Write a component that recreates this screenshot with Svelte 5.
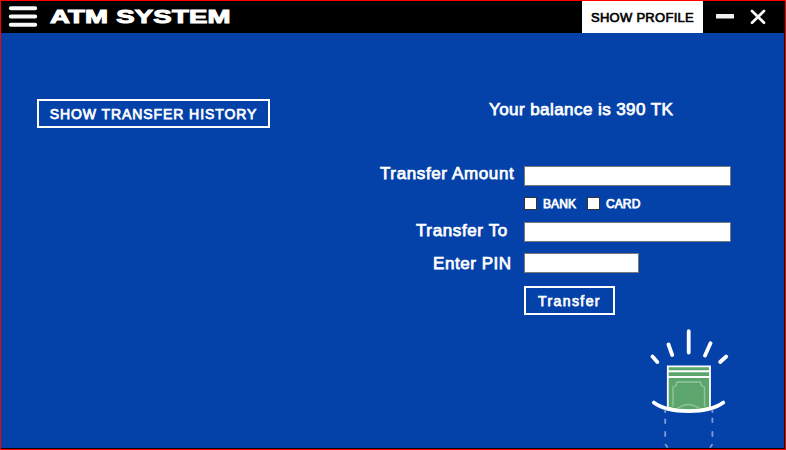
<script>
  let amount = $state('');
  let recipient = $state('');
  let pin = $state('');
  let bank = $state(false);
  let card = $state(false);
</script>

<div class="window">
  <header>
    <button class="icon menu" aria-label="Menu">
      <svg width="30" height="22" viewBox="0 0 30 22" stroke="#f8f8f8" stroke-width="4" stroke-linecap="round">
        <path d="M2.8 3.2H27.2M2.8 11.5H27.2M2.8 19.7H27.2" />
      </svg>
    </button>
    <h1>ATM SYSTEM</h1>
    <button class="profile"><span>SHOW PROFILE</span></button>
    <button class="icon minimize" aria-label="Minimize">
      <svg width="18" height="5" viewBox="0 0 18 5"><rect width="18" height="4.6" rx=".6" fill="#f3eff2" /></svg>
    </button>
    <button class="icon close" aria-label="Close">
      <svg width="16" height="16" viewBox="0 0 16 16" stroke="#f8f8f8" stroke-width="2.7" stroke-linecap="round">
        <path d="M2 2L14 13.7M14 2L2 13.7" />
      </svg>
    </button>
  </header>

  <main>
    <aside><button class="outline history"><span>SHOW TRANSFER HISTORY</span></button></aside>
    <section>
      <p class="balance"><span>Your balance is 390 TK</span></p>
      <div class="row amount">
        <label for="amount">Transfer Amount</label>
        <input id="amount" bind:value={amount} />
      </div>
      <div class="checks">
        <label><input type="checkbox" bind:checked={bank} /><span>BANK</span></label>
        <label><input type="checkbox" bind:checked={card} /><span>CARD</span></label>
      </div>
      <div class="row to">
        <label for="to">Transfer To</label>
        <input id="to" bind:value={recipient} />
      </div>
      <div class="row pin">
        <label for="pin">Enter PIN</label>
        <input id="pin" type="password" bind:value={pin} />
      </div>
      <button class="outline transfer"><span>Transfer</span></button>
      <svg class="cash" width="80" height="120" viewBox="0 0 80 120" fill="none" stroke-linecap="round">
        <path d="M38.7 3.2V24.5M18.5 16.5L22.2 27M60.5 15.2L55 27.5M2.5 28.5L7.3 34M76.2 28.5L70.2 34" stroke="#fff" stroke-width="3.8" />
        <path d="M17.8 38.3H60V79.5Q39 86 17.8 79.5Z" fill="#5ca66d" stroke="#fff" stroke-width="1.8" />
        <path d="M18 43.3H60M18 49H60" stroke="#fff" stroke-width="1.9" stroke-linecap="butt" />
        <path d="M23 78V59Q26.8 58.4 27 54H50.5Q50.7 58.4 54.5 59V78M28 80Q38.5 73 49 80" stroke="#93c49e" stroke-width="1.4" />
        <path d="M3.8 74.5C19 86 58 86 73.3 74.5" stroke="#fff" stroke-width="3.7" />
        <path d="M15.2 82.5V84M62.4 82.5V84M15.2 91.5V95M62.4 90.5V94M15.2 104V108M62.4 104V108M15.7 116.8L17.3 119M62 116.8L60.4 119" stroke="#799bd2" stroke-width="1.9" />
      </svg>
    </section>
  </main>
</div>

<style>
  :global(body) { margin: 0; overflow: hidden; }
  * { box-sizing: border-box; }
  .window {
    width: 786px; height: 450px; border: 1px solid #f00; background: #080808;
    color: #fff; font-family: "Liberation Sans", Arial, sans-serif; overflow: hidden;
  }
  button { font: inherit; color: inherit; padding: 0; border: 0; background: none; white-space: nowrap; }
  span, .row label { -webkit-text-stroke: .75px currentColor; white-space: nowrap; }
  header { display: flex; height: 32px; background: #000; }
  .icon { display: block; line-height: 0; }
  .icon svg { display: block; }
  .menu { width: 30px; height: 22px; margin: 4px 0 0 7px; }
  h1 {
    width: 125px; margin: 5px 0 0 12px; font-size: 19px; line-height: 22px; font-weight: 700; letter-spacing: .15px;
    white-space: nowrap; transform: scaleX(1.45); transform-origin: left; -webkit-text-stroke: 1px #fff;
  }
  .profile { width: 121px; height: 32px; margin-left: auto; background: #fff; color: #000; font-size: 13px; letter-spacing: .28px; }
  .profile span { -webkit-text-stroke-width: .65px; }
  .minimize { margin: 13px 0 0 13px; width: 18px; height: 5px; }
  .close { margin: 8px 19px 0 16px; width: 16px; height: 16px; }
  main { width: 783px; height: 415px; display: flex; background: #0442a9; overflow: hidden; }
  aside { width: 363px; padding: 66px 0 0 36px; }
  section { width: 420px; display: flex; flex-direction: column; }
  section > * { flex-shrink: 0; }
  .outline { display: block; height: 29px; border: 2px solid #fff; }
  .history { width: 233px; font-size: 14px; letter-spacing: .92px; }
  .balance { margin: 67px 0 0 125px; height: 20px; line-height: 20px; font-size: 17px; letter-spacing: .43px; }
  .row { display: flex; height: 20px; }
  .row label { width: 160px; font-size: 17px; line-height: 20px; letter-spacing: .62px; }
  .row input { width: 207px; height: 20px; padding: 2px; border: 1px solid #7a7a7a; border-radius: 0; background: #fff; outline: 0; }
  .amount { margin-top: 46px; }
  .amount label { padding-left: 16px; margin-top: -2px; }
  .checks { display: flex; margin: 11px 0 0 160px; height: 13px; }
  .checks label { display: flex; align-items: center; width: 63px; font-size: 12px; line-height: 13px; }
  .checks span { margin-top: 1px; letter-spacing: .1px; }
  .checks input { appearance: none; margin: 0 6px 0 0; width: 13px; height: 13px; border: 1px solid #333; background: #fff; flex: none; }
  .to { margin-top: 12px; }
  .to label { padding-left: 52px; margin-top: -1px; }
  .pin { margin-top: 11px; }
  .pin label { padding-left: 69px; margin-top: 1px; letter-spacing: .55px; }
  .pin input { width: 115px; }
  .transfer { width: 91px; margin: 13px 0 0 160px; font-size: 14px; letter-spacing: 1.4px; }
  .cash { margin: 13px 0 0 286px; }
</style>
